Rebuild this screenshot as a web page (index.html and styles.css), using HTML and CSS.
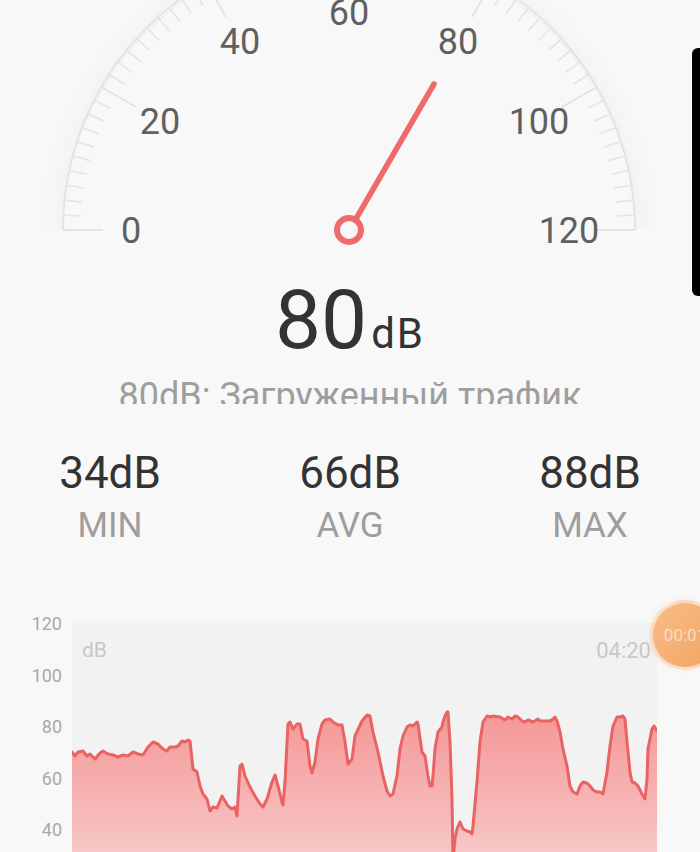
FILE: index.html
```html
<!DOCTYPE html>
<html lang="ru">
<head>
<meta charset="utf-8">
<title>Шумомер</title>
<link rel="stylesheet" href="styles.css">
</head>
<body>
<div class="screen">
  <svg class="gauge" width="700" height="260" viewBox="0 0 700 260">
    <defs>
      <filter id="halo" x="-20%" y="-20%" width="140%" height="160%">
        <feDropShadow dx="0" dy="0" stdDeviation="14" flood-color="#000" flood-opacity="0.05"/>
      </filter>
      <clipPath id="upper"><rect x="0" y="-80" width="700" height="309"/></clipPath>
    </defs>
    <g clip-path="url(#upper)">
      <path d="M63 236 A286 286 0 0 1 635 236 Z" fill="#f8f8f8" filter="url(#halo)"/>
    </g>
    <path class="arc" d="M63 230 A286 286 0 0 1 635 230"/>
    <g class="ticks">
      <line class="major" x1="63" y1="230" x2="103" y2="230" transform="rotate(0 349 230)"/>
      <line x1="63" y1="230" x2="81" y2="230" transform="rotate(3 349 230)"/>
      <line x1="63" y1="230" x2="81" y2="230" transform="rotate(6 349 230)"/>
      <line x1="63" y1="230" x2="81" y2="230" transform="rotate(9 349 230)"/>
      <line x1="63" y1="230" x2="81" y2="230" transform="rotate(12 349 230)"/>
      <line x1="63" y1="230" x2="81" y2="230" transform="rotate(15 349 230)"/>
      <line x1="63" y1="230" x2="81" y2="230" transform="rotate(18 349 230)"/>
      <line x1="63" y1="230" x2="81" y2="230" transform="rotate(21 349 230)"/>
      <line x1="63" y1="230" x2="81" y2="230" transform="rotate(24 349 230)"/>
      <line x1="63" y1="230" x2="81" y2="230" transform="rotate(27 349 230)"/>
      <line class="major" x1="63" y1="230" x2="103" y2="230" transform="rotate(30 349 230)"/>
      <line x1="63" y1="230" x2="81" y2="230" transform="rotate(33 349 230)"/>
      <line x1="63" y1="230" x2="81" y2="230" transform="rotate(36 349 230)"/>
      <line x1="63" y1="230" x2="81" y2="230" transform="rotate(39 349 230)"/>
      <line x1="63" y1="230" x2="81" y2="230" transform="rotate(42 349 230)"/>
      <line x1="63" y1="230" x2="81" y2="230" transform="rotate(45 349 230)"/>
      <line x1="63" y1="230" x2="81" y2="230" transform="rotate(48 349 230)"/>
      <line x1="63" y1="230" x2="81" y2="230" transform="rotate(51 349 230)"/>
      <line x1="63" y1="230" x2="81" y2="230" transform="rotate(54 349 230)"/>
      <line x1="63" y1="230" x2="81" y2="230" transform="rotate(57 349 230)"/>
      <line class="major" x1="63" y1="230" x2="103" y2="230" transform="rotate(60 349 230)"/>
      <line x1="63" y1="230" x2="81" y2="230" transform="rotate(63 349 230)"/>
      <line x1="63" y1="230" x2="81" y2="230" transform="rotate(66 349 230)"/>
      <line x1="63" y1="230" x2="81" y2="230" transform="rotate(69 349 230)"/>
      <line x1="63" y1="230" x2="81" y2="230" transform="rotate(72 349 230)"/>
      <line x1="63" y1="230" x2="81" y2="230" transform="rotate(75 349 230)"/>
      <line x1="63" y1="230" x2="81" y2="230" transform="rotate(78 349 230)"/>
      <line x1="63" y1="230" x2="81" y2="230" transform="rotate(81 349 230)"/>
      <line x1="63" y1="230" x2="81" y2="230" transform="rotate(84 349 230)"/>
      <line x1="63" y1="230" x2="81" y2="230" transform="rotate(87 349 230)"/>
      <line class="major" x1="63" y1="230" x2="103" y2="230" transform="rotate(90 349 230)"/>
      <line x1="63" y1="230" x2="81" y2="230" transform="rotate(93 349 230)"/>
      <line x1="63" y1="230" x2="81" y2="230" transform="rotate(96 349 230)"/>
      <line x1="63" y1="230" x2="81" y2="230" transform="rotate(99 349 230)"/>
      <line x1="63" y1="230" x2="81" y2="230" transform="rotate(102 349 230)"/>
      <line x1="63" y1="230" x2="81" y2="230" transform="rotate(105 349 230)"/>
      <line x1="63" y1="230" x2="81" y2="230" transform="rotate(108 349 230)"/>
      <line x1="63" y1="230" x2="81" y2="230" transform="rotate(111 349 230)"/>
      <line x1="63" y1="230" x2="81" y2="230" transform="rotate(114 349 230)"/>
      <line x1="63" y1="230" x2="81" y2="230" transform="rotate(117 349 230)"/>
      <line class="major" x1="63" y1="230" x2="103" y2="230" transform="rotate(120 349 230)"/>
      <line x1="63" y1="230" x2="81" y2="230" transform="rotate(123 349 230)"/>
      <line x1="63" y1="230" x2="81" y2="230" transform="rotate(126 349 230)"/>
      <line x1="63" y1="230" x2="81" y2="230" transform="rotate(129 349 230)"/>
      <line x1="63" y1="230" x2="81" y2="230" transform="rotate(132 349 230)"/>
      <line x1="63" y1="230" x2="81" y2="230" transform="rotate(135 349 230)"/>
      <line x1="63" y1="230" x2="81" y2="230" transform="rotate(138 349 230)"/>
      <line x1="63" y1="230" x2="81" y2="230" transform="rotate(141 349 230)"/>
      <line x1="63" y1="230" x2="81" y2="230" transform="rotate(144 349 230)"/>
      <line x1="63" y1="230" x2="81" y2="230" transform="rotate(147 349 230)"/>
      <line class="major" x1="63" y1="230" x2="103" y2="230" transform="rotate(150 349 230)"/>
      <line x1="63" y1="230" x2="81" y2="230" transform="rotate(153 349 230)"/>
      <line x1="63" y1="230" x2="81" y2="230" transform="rotate(156 349 230)"/>
      <line x1="63" y1="230" x2="81" y2="230" transform="rotate(159 349 230)"/>
      <line x1="63" y1="230" x2="81" y2="230" transform="rotate(162 349 230)"/>
      <line x1="63" y1="230" x2="81" y2="230" transform="rotate(165 349 230)"/>
      <line x1="63" y1="230" x2="81" y2="230" transform="rotate(168 349 230)"/>
      <line x1="63" y1="230" x2="81" y2="230" transform="rotate(171 349 230)"/>
      <line x1="63" y1="230" x2="81" y2="230" transform="rotate(174 349 230)"/>
      <line x1="63" y1="230" x2="81" y2="230" transform="rotate(177 349 230)"/>
      <line class="major" x1="63" y1="230" x2="103" y2="230" transform="rotate(180 349 230)"/>
    </g>
    <g class="scale-labels">
      <text x="131" y="243">0</text>
      <text x="160" y="134">20</text>
      <text x="240" y="54">40</text>
      <text x="349" y="25">60</text>
      <text x="458" y="54">80</text>
      <text x="539" y="134">100</text>
      <text x="569" y="243">120</text>
    </g>
    <line class="needle" x1="357" y1="217" x2="434" y2="84"/>
    <circle class="hub" cx="349" cy="230" r="12"/>
  </svg>

  <div class="reading">
    <span class="reading-value">80</span><span class="reading-unit">dB</span>
  </div>
  <div class="status"><span class="status-text">80dB: Загруженный трафик</span></div>

  <div class="stats">
    <div class="stat">
      <div class="stat-value">34dB</div>
      <div class="stat-label">MIN</div>
    </div>
    <div class="stat">
      <div class="stat-value">66dB</div>
      <div class="stat-label">AVG</div>
    </div>
    <div class="stat">
      <div class="stat-value">88dB</div>
      <div class="stat-label">MAX</div>
    </div>
  </div>

  <div class="chart">
    <div class="y-axis">
      <div class="y-label">120</div>
      <div class="y-label">100</div>
      <div class="y-label">80</div>
      <div class="y-label">60</div>
      <div class="y-label">40</div>
      <div class="y-label">20</div>
    </div>
    <div class="plot">
      <svg class="plot-svg" width="585" height="280" viewBox="72 624 585 280">
        <defs>
          <linearGradient id="area" gradientUnits="userSpaceOnUse" x1="0" y1="700" x2="0" y2="870">
            <stop offset="0" stop-color="#f59292"/>
            <stop offset="1" stop-color="#f7cccc"/>
          </linearGradient>
        </defs>
        <path class="area" d="M72 904 L72,753 75,757 78,753 83,752 87,757 90,755 95,760 100,754 103,752 108,755 113,756 118,758 123,756 128,757 133,753 138,755 143,756 148,748 153,743 158,745 163,750 167,752 170,748 175,748 178,747 182,742 185,743 188,741 190,742 193,770 197,773 200,787 203,795 207,800 210,812 213,808 217,809 222,797 225,802 228,807 232,810 235,808 237,817 240,767 242,765 245,777 250,788 255,797 260,805 263,808 267,800 272,783 275,776 278,787 282,803 283,806 285,783 288,725 290,723 293,730 297,725 300,725 303,740 307,742 310,767 312,774 315,763 318,740 322,725 325,721 330,720 333,723 338,726 342,726 345,743 348,765 352,760 355,737 362,722 367,716 370,717 373,733 378,753 383,777 387,792 390,797 393,795 397,777 400,750 403,737 407,728 410,726 413,727 417,723 418,725 422,753 425,757 428,777 430,787 432,787 433,777 435,750 438,733 442,728 443,723 445,717 447,713 448,713 450,743 452,800 453,860 455,840 457,830 460,823 463,830 467,832 470,833 472,835 473,827 477,783 480,743 483,723 487,717 490,718 493,717 500,718 505,721 508,718 512,720 515,717 518,718 522,722 525,723 528,721 533,723 538,720 540,722 545,722 550,722 553,720 555,718 557,722 560,733 563,750 567,767 570,787 573,793 577,795 580,787 583,783 587,784 590,787 593,791 597,793 600,793 603,795 607,773 610,747 613,727 617,718 620,718 623,717 625,720 627,743 630,773 632,783 635,784 638,787 642,795 645,800 647,780 648,750 652,730 654,727 657,732 L657 904 Z"/>
        <path class="line" d="M72,753 75,757 78,753 83,752 87,757 90,755 95,760 100,754 103,752 108,755 113,756 118,758 123,756 128,757 133,753 138,755 143,756 148,748 153,743 158,745 163,750 167,752 170,748 175,748 178,747 182,742 185,743 188,741 190,742 193,770 197,773 200,787 203,795 207,800 210,812 213,808 217,809 222,797 225,802 228,807 232,810 235,808 237,817 240,767 242,765 245,777 250,788 255,797 260,805 263,808 267,800 272,783 275,776 278,787 282,803 283,806 285,783 288,725 290,723 293,730 297,725 300,725 303,740 307,742 310,767 312,774 315,763 318,740 322,725 325,721 330,720 333,723 338,726 342,726 345,743 348,765 352,760 355,737 362,722 367,716 370,717 373,733 378,753 383,777 387,792 390,797 393,795 397,777 400,750 403,737 407,728 410,726 413,727 417,723 418,725 422,753 425,757 428,777 430,787 432,787 433,777 435,750 438,733 442,728 443,723 445,717 447,713 448,713 450,743 452,800 453,860 455,840 457,830 460,823 463,830 467,832 470,833 472,835 473,827 477,783 480,743 483,723 487,717 490,718 493,717 500,718 505,721 508,718 512,720 515,717 518,718 522,722 525,723 528,721 533,723 538,720 540,722 545,722 550,722 553,720 555,718 557,722 560,733 563,750 567,767 570,787 573,793 577,795 580,787 583,783 587,784 590,787 593,791 597,793 600,793 603,795 607,773 610,747 613,727 617,718 620,718 623,717 625,720 627,743 630,773 632,783 635,784 638,787 642,795 645,800 647,780 648,750 652,730 654,727 657,732"/>
      </svg>
      <span class="plot-unit">dB</span>
      <span class="plot-time">04:20</span>
    </div>
  </div>

  <div class="timer-badge"><span class="timer-text">00:01</span></div>
  <div class="edge-handle"></div>
</div>
</body>
</html>
```

FILE: styles.css
```css
html, body {
  margin: 0;
  padding: 0;
  background: #f8f8f8;
  overflow: hidden;
}

.screen {
  position: relative;
  width: 700px;
  height: 852px;
  overflow: hidden;
  font-family: Roboto, "Noto Sans", "Liberation Sans", sans-serif;
  background: #f8f8f8;
}

.gauge {
  display: block;
}

.arc {
  fill: none;
  stroke: #e4e4e4;
  stroke-width: 2;
}

.ticks line {
  stroke: #e4e4e4;
  stroke-width: 1.6;
}

.ticks line.major {
  stroke-width: 2;
}

.scale-labels text {
  font-family: Roboto, "Noto Sans", sans-serif;
  font-size: 36px;
  fill: #606060;
  text-anchor: middle;
}

.needle {
  stroke: #ef6a6a;
  stroke-width: 5.5;
  stroke-linecap: round;
}

.hub {
  fill: #f8f8f8;
  stroke: #ef6a6a;
  stroke-width: 6;
}

.reading {
  display: flex;
  justify-content: center;
  align-items: baseline;
  margin-top: 19px;
  line-height: 1;
  color: #333333;
}

.reading-value {
  font-size: 82px;
  line-height: 82px;
}

.reading-unit {
  font-size: 42px;
  line-height: 42px;
  margin-left: 4px;
  letter-spacing: 2px;
}

.status {
  margin-top: 17px;
  height: 26px;
  overflow: hidden;
  text-align: center;
}

.status-text {
  display: block;
  font-size: 36px;
  line-height: 36px;
  color: #9e9e9e;
  white-space: nowrap;
}

.stats {
  display: grid;
  grid-template-columns: repeat(3, 200px);
  column-gap: 40px;
  justify-content: center;
  margin-top: 47px;
  text-align: center;
}

.stat-value {
  font-size: 44px;
  line-height: 44px;
  color: #333333;
}

.stat-label {
  margin-top: 13px;
  font-size: 35px;
  line-height: 35px;
  color: #9e9e9e;
}

.chart {
  display: flex;
  align-items: flex-start;
  margin-top: 80px;
}

.y-axis {
  width: 62px;
  margin-top: -25px;
  margin-right: 10px;
  display: flex;
  flex-direction: column;
  align-items: flex-end;
}

.y-label {
  height: 51.5px;
  line-height: 51.5px;
  font-size: 18px;
  color: #a8a8a8;
}

.plot {
  position: relative;
  width: 585px;
  height: 280px;
  background: #f2f2f2;
}

.plot-svg {
  display: block;
}

.area {
  fill: url(#area);
}

.line {
  fill: none;
  stroke: #ea6262;
  stroke-width: 3;
  stroke-linejoin: round;
  stroke-linecap: round;
}

.plot-unit {
  position: absolute;
  left: 10px;
  top: 15px;
  font-size: 21px;
  color: #c8c8c8;
}

.plot-time {
  position: absolute;
  right: 6px;
  top: 15px;
  font-size: 22px;
  color: #c8c8c8;
}

.timer-badge {
  position: absolute;
  left: 650px;
  top: 600px;
  width: 70px;
  height: 70px;
  box-sizing: border-box;
  border-radius: 50%;
  border: 3px solid rgba(255, 255, 255, 0.55);
  background: linear-gradient(135deg, #f8bd88 0%, #f2a464 100%);
  box-shadow: 0 0 4px rgba(240, 170, 110, 0.25);
  display: flex;
  align-items: center;
  justify-content: center;
}

.timer-text {
  font-size: 17px;
  color: rgba(255, 255, 255, 0.55);
}

.edge-handle {
  position: absolute;
  right: 0;
  top: 48px;
  width: 8px;
  height: 248px;
  background: #000000;
  border-radius: 6px 0 0 6px;
}
```
